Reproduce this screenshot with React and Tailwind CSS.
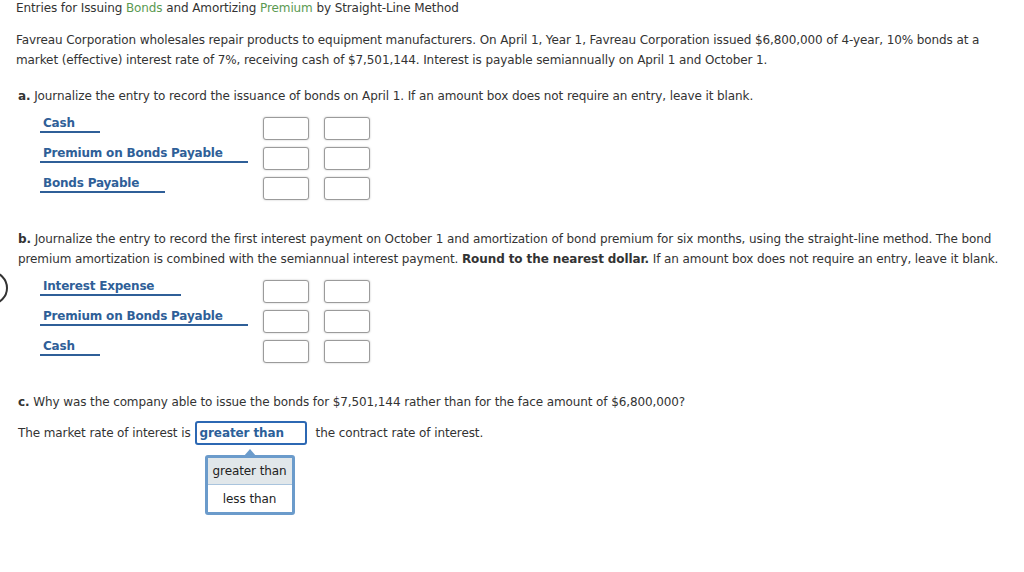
import React from 'react';

const font = { fontFamily: '"DejaVu Sans", Verdana, sans-serif' };

// one journal line: account label with blue underline + two amount boxes
const EntryRow = ({ label, lineWidth }) => (
  <div className="flex h-[30px] items-start">
    <div className="w-[223px] shrink-0">
      <div
        className="border-b-2 border-[#2f5f98] pl-[3px] text-[12px] leading-4 font-bold tracking-[-0.2px] text-[#2f5f98]"
        style={{ width: lineWidth }}
      >
        {label}
      </div>
    </div>
    <div className="mt-[2px] flex gap-[15px]">
      <div className="h-[23px] w-[46px] rounded-[3px] border border-[#9b9b9b] bg-white shadow-[0_0_2px_rgba(0,0,0,0.25)]" />
      <div className="h-[23px] w-[46px] rounded-[3px] border border-[#9b9b9b] bg-white shadow-[0_0_2px_rgba(0,0,0,0.25)]" />
    </div>
  </div>
);

export default function App() {
  return (
    <div className="relative min-h-[572px] w-[1024px] overflow-hidden bg-white px-4 text-[12px] tracking-[-0.1px] text-[#333]" style={font}>
      {/* partial circle at left edge */}
      <div className="absolute left-[-26px] top-[271px] h-[34px] w-[34px] rounded-full border-[2.5px] border-[#333]" />

      <div className="leading-4">
        Entries for Issuing <span className="text-[#5b9a52]">Bonds</span> and Amortizing{' '}
        <span className="text-[#5b9a52]">Premium</span> by Straight-Line Method
      </div>

      <p className="mt-[14px] leading-5">
        Favreau Corporation wholesales repair products to equipment manufacturers. On April 1, Year 1, Favreau Corporation issued $6,800,000 of 4-year, 10% bonds at a market (effective) interest rate of 7%, receiving cash of $7,501,144. Interest is payable semiannually on April 1 and October 1.
      </p>

      <p className="mt-4 pl-[2px] leading-5">
        <span className="font-bold">a.</span> Journalize the entry to record the issuance of bonds on April 1. If an amount box does not require an entry, leave it blank.
      </p>

      <div className="mt-[9px] pl-6">
        <EntryRow label="Cash" lineWidth={60} />
        <EntryRow label="Premium on Bonds Payable" lineWidth={208} />
        <EntryRow label="Bonds Payable" lineWidth={125} />
      </div>

      <p className="mt-6 pl-[2px] leading-5">
        <span className="font-bold">b.</span> Journalize the entry to record the first interest payment on October 1 and amortization of bond premium for six months, using the straight-line method. The bond premium amortization is combined with the semiannual interest payment.{' '}
        <span className="font-bold">Round to the nearest dollar.</span> If an amount box does not require an entry, leave it blank.
      </p>

      <div className="mt-[9px] pl-6">
        <EntryRow label="Interest Expense" lineWidth={141} />
        <EntryRow label="Premium on Bonds Payable" lineWidth={208} />
        <EntryRow label="Cash" lineWidth={60} />
      </div>

      <p className="mt-6 pl-[2px] leading-5">
        <span className="font-bold">c.</span> Why was the company able to issue the bonds for $7,501,144 rather than for the face amount of $6,800,000?
      </p>

      <div className="mt-[9px] flex items-center pl-[2px]">
        <span>The market rate of interest is</span>
        <div className="relative ml-[4px] mr-[9px] flex h-[24px] w-[112px] items-center rounded-[3px] border-2 border-[#2c68b3] pl-[3px] font-bold text-[#2c5f99]">
          greater than
          {/* dropdown menu */}
          <div className="absolute left-[8px] top-[32px] w-[90px]">
            <svg className="absolute left-[39px] top-[-6px]" width="12" height="7" viewBox="0 0 12 7">
              <path d="M0 7 L6 0 L12 7 Z" fill="#6b9bcb" />
            </svg>
            <div className="overflow-hidden rounded-[3px] border-[3px] border-[#6b9bcb] bg-white font-normal text-[#222]">
              <div className="flex h-[27px] items-center justify-center border-b border-[#a9c4dd] bg-[#e1e7ea]">greater than</div>
              <div className="flex h-[27px] items-center justify-center">less than</div>
            </div>
          </div>
        </div>
        <span>the contract rate of interest.</span>
      </div>
    </div>
  );
}
